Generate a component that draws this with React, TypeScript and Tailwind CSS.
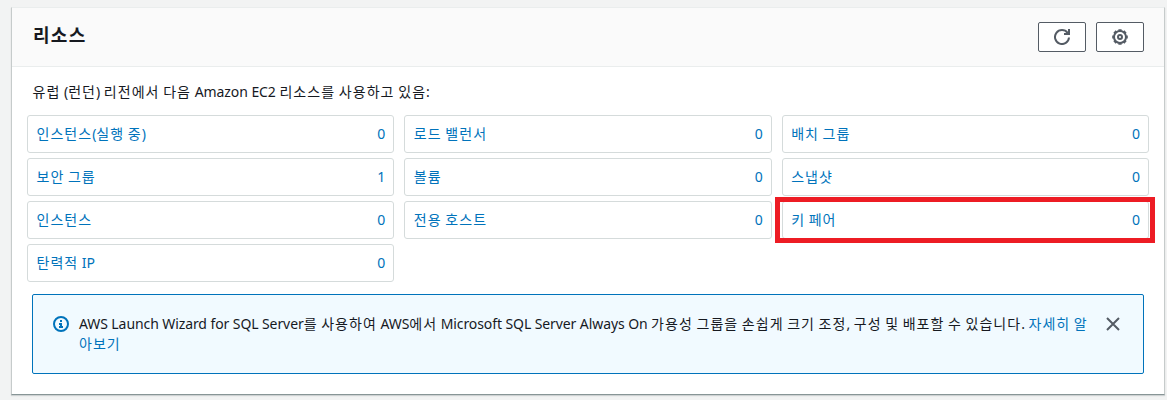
import React from "react";

const HANGUL_RUN = /([\uac00-\ud7a3]+)/;

function Text({ children }: { children: string }) {
  return (
    <>
      {children.split(HANGUL_RUN).map((run, i) =>
        HANGUL_RUN.test(run) ? (
          <span key={i} className="tracking-[1.05px]">
            {run}
          </span>
        ) : (
          <span key={i} className="tracking-[-0.09px]">
            {run}
          </span>
        ),
      )}
    </>
  );
}

const resources = [
  { name: "인스턴스(실행 중)", count: 0 },
  { name: "로드 밸런서", count: 0 },
  { name: "배치 그룹", count: 0 },
  { name: "보안 그룹", count: 1 },
  { name: "볼륨", count: 0 },
  { name: "스냅샷", count: 0 },
  { name: "인스턴스", count: 0 },
  { name: "전용 호스트", count: 0 },
  { name: "키 페어", count: 0, highlighted: true },
  { name: "탄력적 IP", count: 0 },
];

function RefreshIcon() {
  return (
    <svg width="16" height="16" viewBox="0 0 16 16" fill="none" stroke="#545b64" strokeWidth="2">
      <path d="M15 8.5A7 7 0 1 1 13.6 3.8L14.6 5" />
      <path d="M10 5h5V0" />
    </svg>
  );
}

function GearIcon() {
  return (
    <svg width="16" height="16" viewBox="0 0 16 16" fill="none" stroke="#545b64" strokeWidth="2">
      <circle cx="8" cy="8" r="6" />
      <path
        strokeWidth="3.2"
        d="M8 .2v2.3M8 13.5v2.3M.2 8h2.3M13.5 8h2.3M2.5 2.5l1.6 1.6M11.9 11.9l1.6 1.6M2.5 13.5l1.6-1.6M11.9 4.1l1.6-1.6"
      />
      <circle cx="8" cy="8" r="2" />
    </svg>
  );
}

function InfoIcon() {
  return (
    <svg width="16" height="16" viewBox="0 0 16 16" fill="none" stroke="#0073bb" strokeWidth="2">
      <circle cx="8" cy="8" r="7" />
      <path d="M7 5h2M6 8h2v3M6 11h4" />
    </svg>
  );
}

export default function App() {
  return (
    <div className="h-[400px] w-[1167px] overflow-hidden bg-[#f2f3f3] pt-[7px] pl-[11px] font-['Noto_Sans','Noto_Sans_CJK_KR',sans-serif] text-[14px] leading-5 text-[#16191f]">
      <section className="h-[388px] w-[1154px] border border-t-[#eaeded] border-r-[#c6cbcb] border-b-[#879596] border-l-[#c6cbcb] bg-white shadow-[0_1px_1px_rgba(0,28,36,0.15)]">
        <header className="flex h-[59px] items-center justify-between border-b border-[#eaeded] bg-[#fafafa] pr-[20px] pl-[21px]">
          <h2 className="pb-[4px] text-[18px] leading-[22px] font-bold tracking-[1.3px]">리소스</h2>
          <div className="flex gap-[10px]">
            <button className="flex h-[30px] w-[48px] items-center justify-center rounded-[2px] border border-[#545b64] bg-white">
              <RefreshIcon />
            </button>
            <button className="flex h-[30px] w-[48px] items-center justify-center rounded-[2px] border border-[#545b64] bg-white">
              <GearIcon />
            </button>
          </div>
        </header>
        <p className="mt-[15px] ml-[20.5px] [word-spacing:0.1px] whitespace-nowrap">
          <Text>유럽 (런던) 리전에서 다음 Amazon EC2 리소스를 사용하고 있음:</Text>
        </p>
        <div className="mt-[13px] ml-[15px] grid w-[1122px] grid-cols-3 gap-x-[10px] gap-y-[5px]">
          {resources.map((r) => (
            <div
              key={r.name}
              className="relative flex h-[38px] items-center justify-between rounded-[3px] border border-[#d5dbdb] pr-[8px] pl-[8.5px] text-[#0073bb]"
            >
              <span>
                <Text>{r.name}</Text>
              </span>
              <span>{r.count}</span>
              {r.highlighted && (
                <div className="absolute -top-[5px] -right-[7px] -bottom-[5px] -left-[8px] border-5 border-[#ed1c24]" />
              )}
            </div>
          ))}
        </div>
        <div className="mt-[12px] ml-[20px] flex h-[80px] w-[1112px] rounded-[2px] border border-[#0073bb] bg-[#f1faff] pt-[19px] pl-[20px]">
          <div className="mt-[2px] mr-[10px]">
            <InfoIcon />
          </div>
          <div className="w-[1014px] whitespace-nowrap">
            <Text>AWS Launch Wizard for SQL Server를 사용하여 AWS에서 Microsoft SQL Server Always On 가용성 그룹을 손쉽게 크기 조정, 구성 및 배포할 수 있습니다. </Text>
            <a className="text-[#0073bb]">
              <Text>자세히 알</Text>
              <br />
              <Text>아보기</Text>
            </a>
          </div>
          <svg className="mt-[3px] ml-[13px]" width="14" height="14" viewBox="0 0 14 14" fill="none" stroke="#545b64" strokeWidth="2">
            <path d="M1 1l12 12M13 1L1 13" />
          </svg>
        </div>
      </section>
    </div>
  );
}
